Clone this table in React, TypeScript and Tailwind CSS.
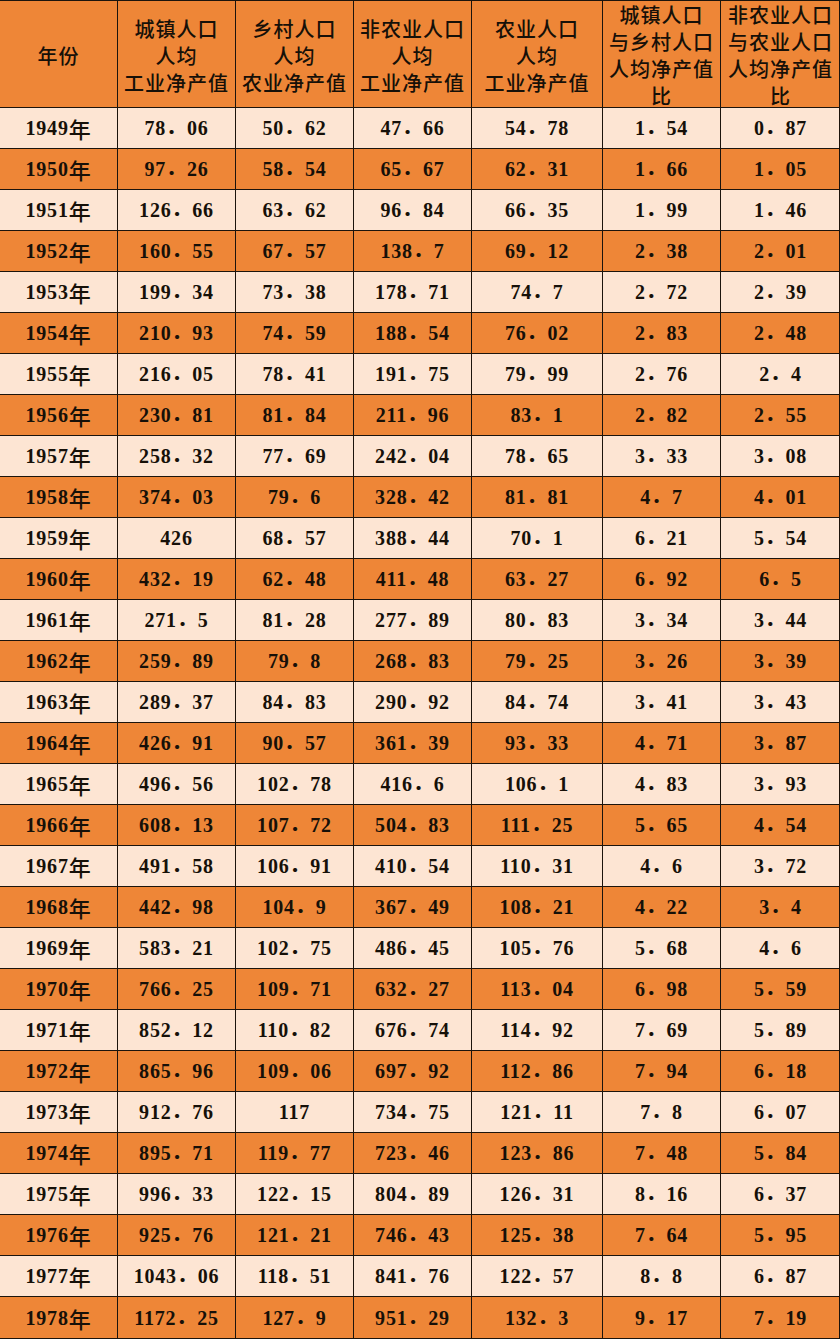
import React from "react";

const rows: string[][] = [
  ["1949", "78.06", "50.62", "47.66", "54.78", "1.54", "0.87"],
  ["1950", "97.26", "58.54", "65.67", "62.31", "1.66", "1.05"],
  ["1951", "126.66", "63.62", "96.84", "66.35", "1.99", "1.46"],
  ["1952", "160.55", "67.57", "138.7", "69.12", "2.38", "2.01"],
  ["1953", "199.34", "73.38", "178.71", "74.7", "2.72", "2.39"],
  ["1954", "210.93", "74.59", "188.54", "76.02", "2.83", "2.48"],
  ["1955", "216.05", "78.41", "191.75", "79.99", "2.76", "2.4"],
  ["1956", "230.81", "81.84", "211.96", "83.1", "2.82", "2.55"],
  ["1957", "258.32", "77.69", "242.04", "78.65", "3.33", "3.08"],
  ["1958", "374.03", "79.6", "328.42", "81.81", "4.7", "4.01"],
  ["1959", "426", "68.57", "388.44", "70.1", "6.21", "5.54"],
  ["1960", "432.19", "62.48", "411.48", "63.27", "6.92", "6.5"],
  ["1961", "271.5", "81.28", "277.89", "80.83", "3.34", "3.44"],
  ["1962", "259.89", "79.8", "268.83", "79.25", "3.26", "3.39"],
  ["1963", "289.37", "84.83", "290.92", "84.74", "3.41", "3.43"],
  ["1964", "426.91", "90.57", "361.39", "93.33", "4.71", "3.87"],
  ["1965", "496.56", "102.78", "416.6", "106.1", "4.83", "3.93"],
  ["1966", "608.13", "107.72", "504.83", "111.25", "5.65", "4.54"],
  ["1967", "491.58", "106.91", "410.54", "110.31", "4.6", "3.72"],
  ["1968", "442.98", "104.9", "367.49", "108.21", "4.22", "3.4"],
  ["1969", "583.21", "102.75", "486.45", "105.76", "5.68", "4.6"],
  ["1970", "766.25", "109.71", "632.27", "113.04", "6.98", "5.59"],
  ["1971", "852.12", "110.82", "676.74", "114.92", "7.69", "5.89"],
  ["1972", "865.96", "109.06", "697.92", "112.86", "7.94", "6.18"],
  ["1973", "912.76", "117", "734.75", "121.11", "7.8", "6.07"],
  ["1974", "895.71", "119.77", "723.46", "123.86", "7.48", "5.84"],
  ["1975", "996.33", "122.15", "804.89", "126.31", "8.16", "6.37"],
  ["1976", "925.76", "121.21", "746.43", "125.38", "7.64", "5.95"],
  ["1977", "1043.06", "118.51", "841.76", "122.57", "8.8", "6.87"],
  ["1978", "1172.25", "127.9", "951.29", "132.3", "9.17", "7.19"],
];

const headers: string[][] = [
  ["年份"],
  ["城镇人口", "人均", "工业净产值"],
  ["乡村人口", "人均", "农业净产值"],
  ["非农业人口", "人均", "工业净产值"],
  ["农业人口", "人均", "工业净产值"],
  ["城镇人口", "与乡村人口", "人均净产值", "比"],
  ["非农业人口", "与农业人口", "人均净产值", "比"],
];

const grid = "grid grid-cols-[118px_118px_118px_118px_131px_118px_119px]";
const font = {
  fontFamily: '"Liberation Serif", "Noto Sans CJK SC", serif',
} as React.CSSProperties;
const cjk = { fontFamily: '"Noto Sans CJK SC", serif' } as React.CSSProperties;

export default function App() {
  return (
    <div
      className="w-[840px] bg-[#ee8637] text-[#161008] border-t border-r border-b border-[#1c140c]"
      style={font}
    >
      <div className={`${grid} h-[107px] border-b-[1.5px] border-[#1c140c] bg-[#ee8637]`}>
        {headers.map((h, i) => (
          <div
            key={i}
            className={`flex flex-col items-center justify-center text-[20px] leading-[27px] font-medium tracking-[1px] ${
              i < 6 ? "border-r-[1.5px] border-[#1c140c]" : ""
            }`}
            style={cjk}
          >
            {h.map((l, j) => (
              <div key={j} className="whitespace-nowrap h-[27px]">
                {l}
              </div>
            ))}
          </div>
        ))}
      </div>
      {rows.map((r, ri) => (
        <div
          key={ri}
          className={`${grid} h-[41px] ${ri < rows.length - 1 ? "border-b-[1.5px] border-[#1c140c]" : ""} ${
            ri % 2 === 0 ? "bg-[#fde5d3]" : "bg-[#ee8637]"
          }`}
        >
          {r.map((c, ci) => (
            <div
              key={ci}
              className={`flex items-center justify-center text-[20px] font-bold tracking-[0.8px] ${
                ci < 6 ? "border-r-[1.5px] border-[#1c140c]" : ""
              }`}
            >
              {ci === 0 ? (
                <span className="flex items-center">
                  <span>{c}</span>
                  <span className="font-medium text-[22px] leading-none" style={cjk}>
                    年
                  </span>
                </span>
              ) : (
                <span className="whitespace-nowrap">{c.replace(".", "．")}</span>
              )}
            </div>
          ))}
        </div>
      ))}
    </div>
  );
}
